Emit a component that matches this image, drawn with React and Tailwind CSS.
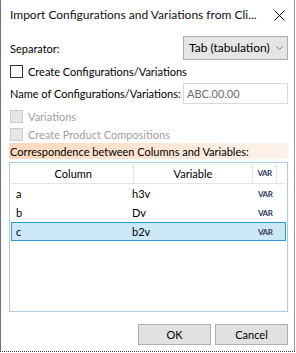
export default function App() {
    const rows = [
        { col: "a", v: "h3v" },
        { col: "b", v: "Dv" },
        { col: "c", v: "b2v", sel: true },
    ]
    return (
        <div className="w-[296px] h-[353px] bg-white" style={{ fontFamily: "Lato, 'Liberation Sans', sans-serif" }}>
            <div className="w-[295px] h-[351px] border-l border-r border-l-[#6f6f77] border-r-[#9a9a9a] flex flex-col text-[11px] text-black leading-none whitespace-nowrap">
                <div className="h-[30px] flex items-center justify-between pl-[9px] pr-[9px] shrink-0">
                    <span className="text-[12px] text-[#111]">Import Configurations and Variations from Cli...</span>
                    <svg width="11" height="11" viewBox="0 0 11 11" className="shrink-0">
                        <path d="M0.5 0.5 L10.5 10.5 M10.5 0.5 L0.5 10.5" stroke="#000" strokeWidth="1" fill="none" />
                    </svg>
                </div>
                <div className="pl-[9px] pr-[6px] flex flex-col">
                    <div className="mt-[6px] h-[24px] flex items-center justify-between">
                        <span>Separator:</span>
                        <div className="w-[105px] h-[24px] bg-[#e5e5e5] border border-[#adadad] flex items-center justify-between pl-[5px] pr-[4px] text-[12px]">
                            <span>Tab (tabulation)</span>
                            <svg width="7" height="4" viewBox="0 0 7 4">
                                <path d="M0.5 0.5 L3.5 3.5 L6.5 0.5" stroke="#777" strokeWidth="1" fill="none" />
                            </svg>
                        </div>
                    </div>
                    <div className="mt-[5px] h-[13px] flex items-center gap-[5px]">
                        <div className="w-[13px] h-[13px] border border-[#333] bg-white" />
                        <span>Create Configurations/Variations</span>
                    </div>
                    <div className="mt-[5px] h-[21px] flex items-center justify-between">
                        <span>Name of Configurations/Variations:</span>
                        <div className="w-[105px] shrink-0 h-[21px] border border-[#d9d9d9] bg-white flex items-center pl-[3px] text-[#6d6d6d]">ABC.00.00</div>
                    </div>
                    <div className="mt-[6px] h-[13px] flex items-center gap-[5px] text-[#a0a0a0]">
                        <div className="w-[13px] h-[13px] border border-[#cccccc] bg-[#e6e6e6]" />
                        <span>Variations</span>
                    </div>
                    <div className="mt-[5px] h-[13px] flex items-center gap-[5px] text-[#a0a0a0]">
                        <div className="w-[13px] h-[13px] border border-[#cccccc] bg-[#e6e6e6]" />
                        <span>Create Product Compositions</span>
                    </div>
                </div>
                <div className="pl-[8px] pr-[6px] flex flex-col">
                    <div className="mt-[2px] h-[16px] flex items-center pl-[1px] bg-gradient-to-r from-[#fcd8bb] to-[#fdf3ec]">
                        Correspondence between Columns and Variables:
                    </div>
                    <div className="mt-[3px] h-[150px] border border-[#a9cde8] flex flex-col px-[1px]">
                        <div className="h-[21px] flex pl-[3px] pr-[9px] border-b border-[#e5e5e5]">
                            <div className="w-[121px] flex items-center justify-center border-r border-[#e5e5e5]">Column</div>
                            <div className="w-[121px] flex items-center justify-center border-r border-[#e5e5e5]">Variable</div>
                            <div className="w-[24px] flex items-center justify-center border-r border-[#e5e5e5] text-[8px] font-bold text-[#2c3a5e] tracking-[-0.5px]">VAR</div>
                        </div>
                        {rows.map((r) => (
                            <div
                                key={r.col}
                                className={
                                    r.sel
                                        ? "h-[19px] flex items-center border border-[#2b9bd9] bg-[#cce7f6] pl-[4px]"
                                        : "h-[19px] flex items-center border border-transparent pl-[4px]"
                                }
                            >
                                <div className="w-[116px]">{r.col}</div>
                                <div className="w-[126px]">{r.v}</div>
                                <div className="text-[8px] font-bold text-[#2c3a5e] tracking-[-0.5px]">VAR</div>
                            </div>
                        ))}
                    </div>
                    <div className="mt-[12px] flex justify-end gap-[4px]">
                        <div className="w-[73px] h-[21px] bg-[#e1e1e1] border border-[#adadad] flex items-center justify-center">OK</div>
                        <div className="w-[73px] h-[21px] bg-[#e1e1e1] border border-[#adadad] flex items-center justify-center">Cancel</div>
                    </div>
                </div>
            </div>
            <div className="w-[295px] h-[1px] border-t border-dotted border-[#444]" />
        </div>
    )
}
